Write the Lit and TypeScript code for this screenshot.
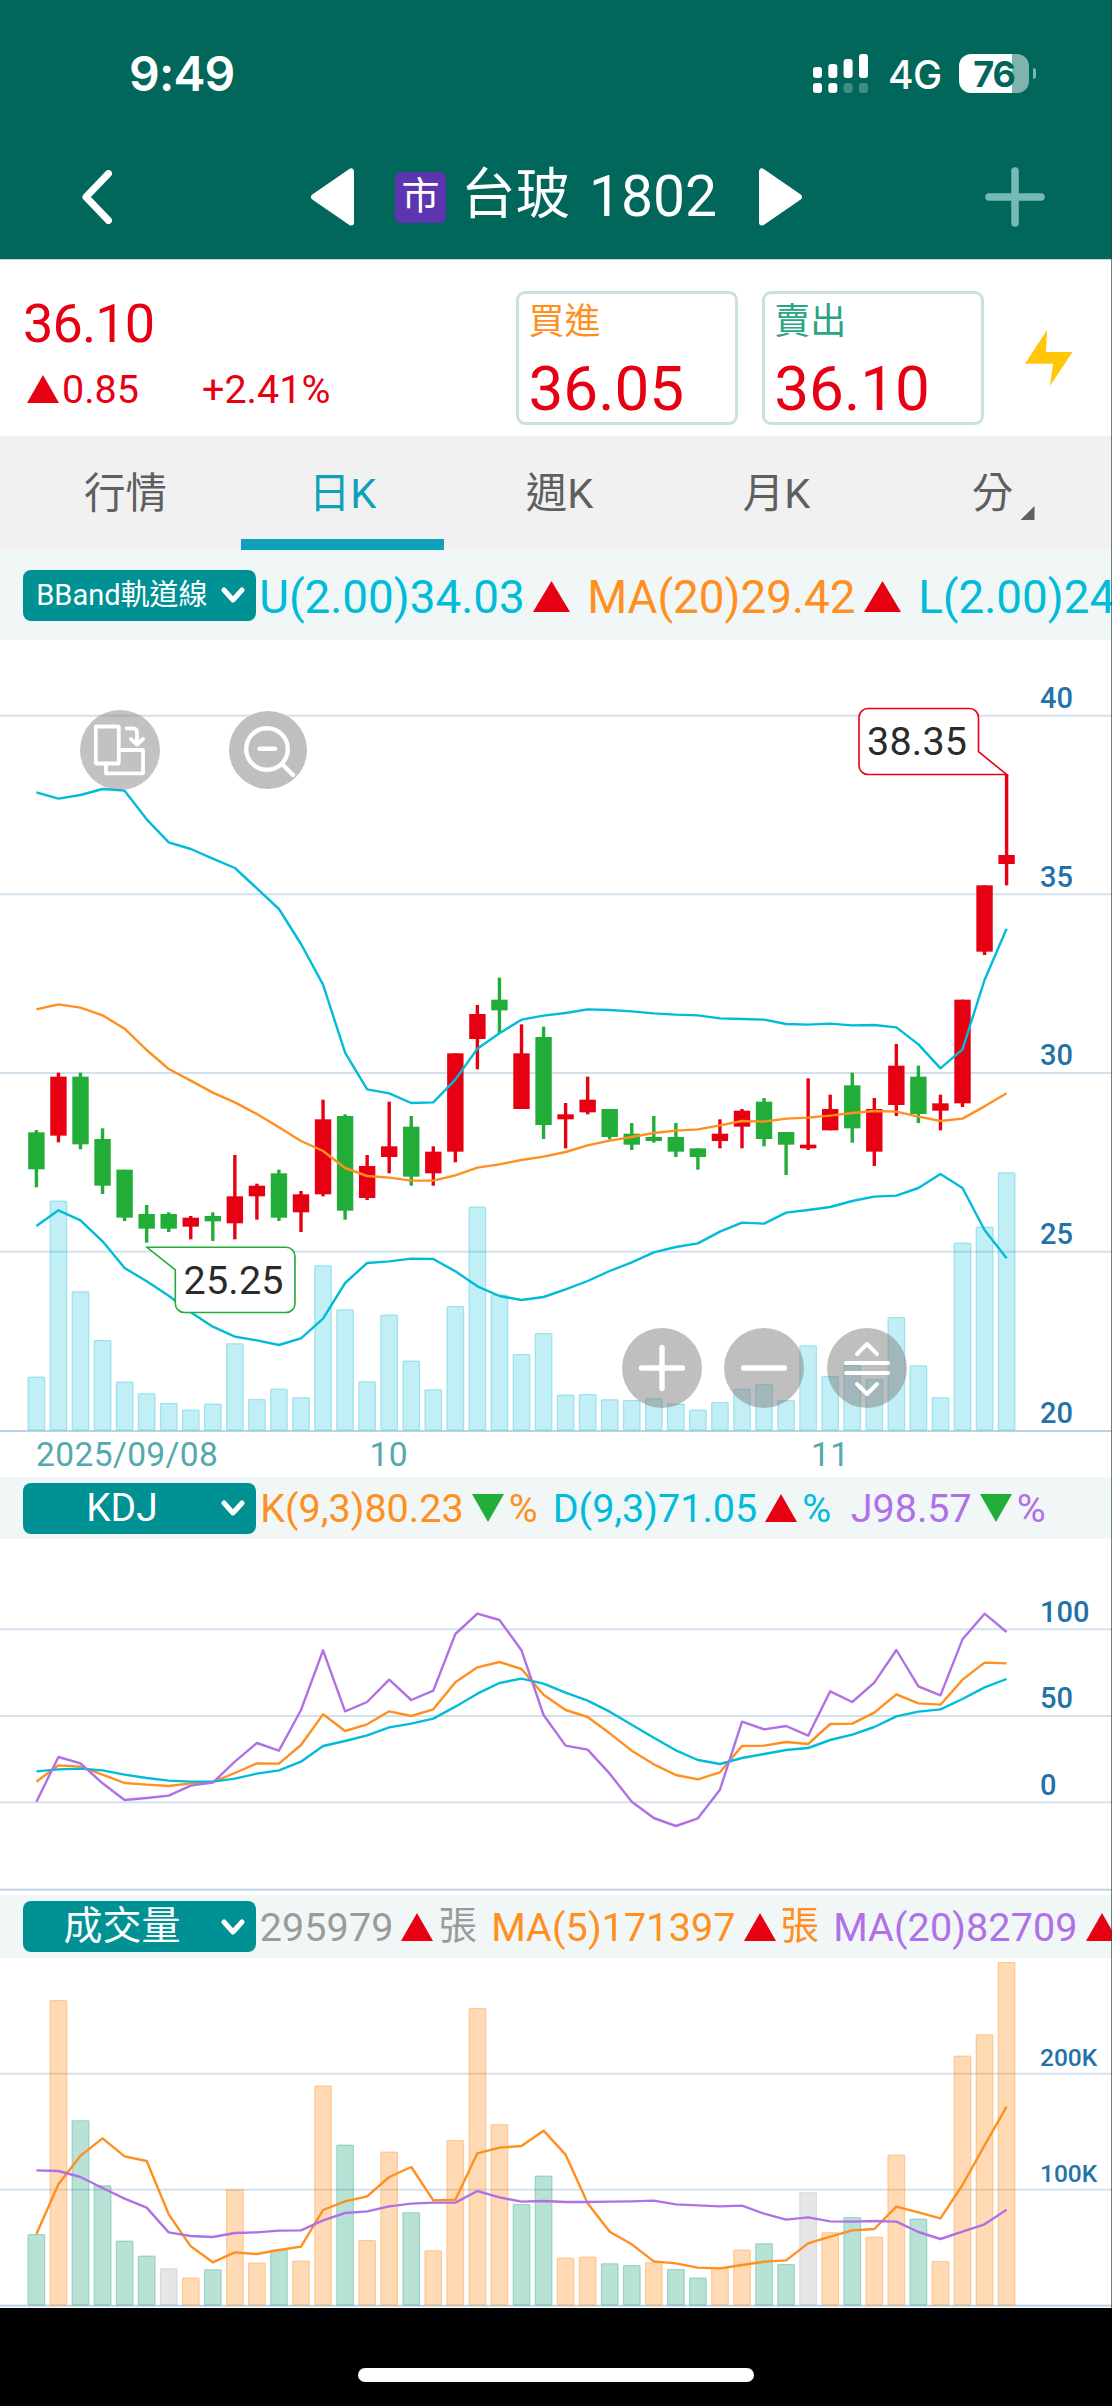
import { LitElement, html, svg, css } from "lit";
import { customElement, property } from "lit/decorators.js";

const RED = "#e60012";
const GREEN = "#22ac38";
const CYAN = "#00bcd9";
const ORANGE = "#ff8f1f";
const PURPLE = "#b070e6";

const FIRST_X = 36.4;
const STEP = 22.05;
const barX = (i: number) => FIRST_X + i * STEP;

// Series ordinates are stored in thirds of a pixel from each pane's own origin.
type Candle = [up: number, top: number, bottom: number, high: number, low: number];

const CANDLES: Candle[] = [
  [0, 277, 388, 270, 442], [1, 110, 287, 98, 307], [0, 110, 313, 98, 328], [0, 297, 437, 265, 462],
  [0, 389, 533, 389, 543], [0, 522, 566, 495, 608], [0, 522, 566, 517, 576], [1, 533, 560, 528, 598],
  [0, 528, 544, 517, 603], [1, 469, 550, 345, 598], [1, 437, 469, 431, 539], [0, 400, 533, 389, 543],
  [1, 463, 517, 453, 576], [1, 238, 463, 179, 469], [0, 228, 512, 223, 539], [1, 378, 474, 345, 480],
  [1, 319, 351, 185, 400], [0, 260, 410, 228, 437], [1, 335, 400, 319, 437], [1, 40, 335, 40, 367],
  [1, -78, -3, -105, 88], [0, -121, -89, -187, -20], [1, 40, 207, -47, 207], [0, -9, 255, -40, 297],
  [1, 223, 238, 189, 325], [1, 179, 217, 110, 223], [0, 207, 291, 207, 298], [0, 281, 314, 249, 330],
  [0, 291, 303, 228, 308], [0, 291, 335, 249, 351], [0, 325, 351, 325, 389], [1, 281, 303, 238, 325],
  [1, 212, 260, 207, 325], [0, 185, 297, 174, 319], [0, 276, 314, 276, 405], [1, 314, 325, 115, 330],
  [1, 207, 271, 164, 271], [0, 136, 265, 98, 308], [1, 207, 335, 174, 378], [1, 77, 195, 12, 228],
  [0, 110, 222, 77, 249], [1, 190, 212, 164, 271], [1, -121, 190, -121, 201], [1, -464, -265, -464, -255],
  [1, -555, -528, -797, -464],
];

const UPPER = [-743, -724, -735, -753, -748, -662, -593, -573, -544, -516, -455, -393, -288, -166, 38, 148, 160, 189,
  187, 119, 26, -20, -61, -73, -81, -92, -90, -86, -80, -76, -74, -65, -63, -61, -48, -46, -49, -44, -45, -38, 13, 85,
  28, -180, -334];
const MIDDLE = [-92, -107, -97, -74, -34, 30, 87, 122, 158, 187, 222, 262, 303, 333, 384, 408, 413, 422, 422, 406, 383,
  373, 360, 350, 336, 316, 302, 291, 279, 272, 268, 256, 243, 245, 236, 233, 227, 219, 213, 215, 230, 243, 236, 199, 160];
const LOWER = [558, 511, 541, 604, 684, 724, 767, 817, 860, 890, 901, 915, 895, 836, 729, 669, 664, 656, 657, 694, 739,
  768, 780, 771, 748, 723, 693, 667, 637, 621, 610, 575, 548, 551, 518, 510, 501, 483, 470, 467, 444, 402, 444, 570, 655];
const BACK_VOLUME = [1010, 482, 754, 900, 1025, 1060, 1089, 1109, 1091, 910, 1077, 1046, 1072, 676, 808, 1024, 824, 962,
  1048, 798, 500, 764, 942, 879, 1064, 1062, 1078, 1080, 1075, 1091, 1109, 1086, 1046, 1032, 1080, 916, 1008, 975, 1017,
  831, 976, 1072, 608, 560, 397];

const J_LINE = [1025, 891, 910, 970, 1020, 1014, 1007, 977, 968, 905, 849, 872, 750, 571, 754, 726, 659, 720, 692, 522,
  461, 480, 571, 765, 857, 869, 941, 1025, 1074, 1098, 1075, 989, 785, 808, 798, 827, 694, 726, 668, 570, 679, 706, 538,
  461, 516];
const K_LINE = [965, 916, 920, 944, 969, 974, 978, 970, 966, 939, 910, 911, 855, 763, 813, 793, 754, 768, 748, 667, 622,
  606, 627, 704, 750, 771, 820, 872, 913, 945, 958, 937, 858, 857, 846, 852, 792, 791, 758, 703, 730, 734, 659, 608, 610];
const D_LINE = [934, 928, 926, 931, 944, 954, 962, 965, 965, 956, 941, 931, 905, 858, 843, 826, 802, 791, 776, 740, 701,
  669, 656, 671, 698, 722, 755, 794, 833, 871, 900, 912, 894, 882, 870, 864, 840, 824, 801, 769, 755, 748, 717, 682, 657];

const VOLUME = [1032, 330, 691, 886, 1052, 1097, 1135, 1163, 1138, 898, 1118, 1079, 1112, 587, 764, 1050, 785, 967, 1081,
  750, 354, 703, 942, 857, 1103, 1100, 1120, 1125, 1116, 1137, 1163, 1133, 1079, 1060, 1122, 907, 1027, 981, 1040, 794,
  986, 1113, 497, 433, 216];
// d = down day, u = up day, f = flat day
const VOLUME_SIDE = "duddddfudu" + "uduuduuduu" + "uudduuddud" + "duuddfuduu" + "duuuu";
const VOL_MA5 = [1032, 883, 797, 745, 799, 813, 973, 1069, 1117, 1087, 1092, 1080, 1070, 960, 934, 919, 861, 831, 931,
  929, 790, 773, 768, 722, 794, 940, 1025, 1063, 1114, 1120, 1133, 1135, 1125, 1115, 1111, 1060, 1040, 1021, 1017, 950,
  967, 985, 885, 766, 650];
const VOL_MA20 = [841, 843, 861, 894, 926, 953, 1027, 1038, 1041, 1029, 1027, 1022, 1021, 991, 969, 964, 949, 941, 938,
  938, 903, 922, 935, 933, 936, 936, 935, 934, 932, 943, 946, 949, 947, 971, 989, 982, 994, 995, 993, 995, 1026, 1047,
  1025, 1003, 959];

const SIDE_COLORS: Record<string, [string, string]> = {
  u: ["rgba(255,143,31,.33)", "rgba(255,143,31,.22)"],
  d: ["rgba(30,160,125,.31)", "rgba(30,160,125,.2)"],
  f: ["rgba(150,150,150,.24)", "rgba(150,150,150,.14)"],
};

function curve(values: number[], origin: number, color: string) {
  const points = values.map((v, i) => `${barX(i).toFixed(2)},${(origin + v / 3).toFixed(2)}`).join(" ");
  return svg`<polyline points=${points} fill="none" stroke=${color} stroke-width="2.4" stroke-linejoin="round"/>`;
}

function grid(y: number, label = "", size = 29, color = "#d3e1ed") {
  return svg`<rect x="0" y=${y - 1} width="1112" height="2" fill=${color}/>
    <text class="axis" x="1040" y=${y - 7.7} font-size=${size}>${label}</text>`;
}

function volumeBar(i: number, top: number, base: number, fill: string, edge: string) {
  const x = barX(i);
  return svg`<rect x=${x - 8.8} y=${top} width="17.6" height=${base - top} rx="1" fill=${fill}/>
    <rect x=${x - 8.2} y=${top + 0.6} width="16.4" height=${base - top - 1.2} rx="1" fill="none" stroke=${edge} stroke-width="1.3"/>`;
}

@customElement("price-pane")
class PricePane extends LitElement {
  static styles = css`
    :host { display: block; position: relative; height: 837px; background: #fff; }
    svg { display: block; }
    text { font-family: Roboto, sans-serif; }
    .axis { font-weight: 500; fill: #2372a8; letter-spacing: 0; }
    .date { font-size: 33.5px; fill: #53a9ab; letter-spacing: 0.4px; }
    .tip { font-size: 39.5px; fill: #2b2b2b; letter-spacing: 0.2px; }
    .tool { position: absolute; width: 80px; height: 80px; padding: 0; border: 0; border-radius: 50%; background: rgba(128, 128, 128, 0.5); }
    .tool svg { stroke: #fff; fill: none; stroke-linecap: round; stroke-linejoin: round; }
    .rotate { left: 80px; top: 69.5px; opacity: .95; }
    .lens { left: 229px; top: 70.5px; width: 78px; height: 78px; background: #bfbfbf; }
    .plus { left: 621.5px; top: 688px; }
    .minus { left: 724px; top: 688px; }
    .stretch { left: 826.5px; top: 688px; }
  `;

  render() {
    const O = 400;
    return html`
      <svg width="1112" height="837" viewBox="0 0 1112 837">
        ${grid(75.7, "40")}${grid(254.3, "35")}${grid(433, "30")}${grid(611.7, "25")}${grid(791, "20", 29, "#bdd3e5")}
        ${BACK_VOLUME.map((v, i) => volumeBar(i, O + v / 3, 790.5, "rgba(0,184,212,.24)", "rgba(0,184,212,.2)"))}
        ${CANDLES.map(([up, top, bottom, high, low], i) => {
          const c = up ? RED : GREEN;
          return svg`<rect x=${barX(i) - 1.7} y=${O + high / 3} width="3.4" height=${(low - high) / 3} fill=${c}/>
            <rect x=${barX(i) - 8.2} y=${O + top / 3} width="16.4" height=${(bottom - top) / 3} fill=${c}/>`;
        })}
        ${curve(UPPER, O, CYAN)}${curve(MIDDLE, O, ORANGE)}${curve(LOWER, O, CYAN)}
        <path d="M868 68.5H969.5A9 9 0 0 1 978.5 77.5V111.7L1006.6 134.5H868A9 9 0 0 1 859 125.5V77.5A9 9 0 0 1 868 68.5Z" fill="#fff" stroke=${RED} stroke-width="1.6"/>
        <text class="tip" x="867" y="115.3">38.35</text>
        <path d="M147 607.3H286A9 9 0 0 1 295 616.3V663.5A9 9 0 0 1 286 672.5H184.3A9 9 0 0 1 175.3 663.5V630Z" fill="#fff" stroke=${GREEN} stroke-width="1.6"/>
        <text class="tip" x="183.5" y="653.8">25.25</text>
        <text class="date" x="36" y="825.5">2025/09/08</text>
        <text class="date" x="369.5" y="825.5">10</text>
        <text class="date" x="811" y="825.5">11</text>
      </svg>
      <button class="tool rotate" aria-label="旋轉">
        <svg width="80" height="80" viewBox="0 0 80 80" stroke-width="3.8">
          <rect x="15.8" y="16.5" width="23" height="37" rx="1"/>
          <path d="M26 54V63.3H63V40H40M46.5 18.3H53Q57 18.3 57 22.5V33M51 29L57 34.5L63 29"/>
        </svg>
      </button>
      <button class="tool lens" aria-label="縮小">
        <svg width="78" height="78" viewBox="0 0 78 78" stroke-width="4.4">
          <circle cx="38" cy="38" r="20.8"/><path d="M30.5 37.8H46M53.5 53.5L64 64"/>
        </svg>
      </button>
      <button class="tool plus" aria-label="放大">
        <svg width="80" height="80" viewBox="0 0 80 80" stroke-width="5.4"><path d="M19.5 40H60.5M40 19.5V60.5"/></svg>
      </button>
      <button class="tool minus" aria-label="減少">
        <svg width="80" height="80" viewBox="0 0 80 80" stroke-width="5.4"><path d="M19.5 40H60.5"/></svg>
      </button>
      <button class="tool stretch" aria-label="伸縮">
        <svg width="80" height="80" viewBox="0 0 80 80" stroke-width="4">
          <path d="M19 35H61M19 45H61M30 26L40 16L50 26M30 56L40 66L50 56"/>
        </svg>
      </button>
    `;
  }
}

@customElement("kdj-pane")
class KdjPane extends LitElement {
  static styles = css`
    :host { display: block; height: 356px; background: #fff; }
    svg { display: block; }
    .axis { font-family: Roboto, sans-serif; font-weight: 500; fill: #2372a8; }
  `;
  render() {
    return html`<svg width="1112" height="356" viewBox="0 0 1112 356">
      ${grid(90.3, "100")}${grid(177, "50")}${grid(263.3, "0")}${grid(350.7, "", 29, "#bdd3e5")}
      ${curve(K_LINE, -79, ORANGE)}${curve(D_LINE, -79, CYAN)}${curve(J_LINE, -79, PURPLE)}
    </svg>`;
  }
}

@customElement("volume-pane")
class VolumePane extends LitElement {
  static styles = css`
    :host { display: block; height: 350px; background: #fff; }
    svg { display: block; }
    .axis { font-family: Roboto, sans-serif; font-weight: 500; fill: #2372a8; }
  `;
  render() {
    return html`<svg width="1112" height="350" viewBox="0 0 1112 350">
      ${grid(115.7, "200K", 24.5)}${grid(231.7, "100K", 24.5)}${grid(347.7, "", 25, "#bdd3e5")}
      ${VOLUME.map((v, i) => {
        const [fill, edge] = SIDE_COLORS[VOLUME_SIDE[i]];
        return volumeBar(i, v / 3 - 68, 347.5, fill, edge);
      })}
      ${curve(VOL_MA5, -68, ORANGE)}${curve(VOL_MA20, -68, PURPLE)}
    </svg>`;
  }
}

@customElement("select-button")
class SelectButton extends LitElement {
  @property() label = "";
  @property({ type: Boolean, reflect: true }) small = false;
  static styles = css`
    :host { display: block; flex: none; width: 233.5px; height: 51px; }
    .button { display: flex; box-sizing: border-box; width: 100%; height: 100%; align-items: center; padding: 0 11px 0 0;
      border-radius: 8px; background: #009194; color: #fff; font-size: 39px; line-height: 51px; letter-spacing: 0; }
    .text { flex: 1; height: 51px; text-align: center; white-space: nowrap; }
    :host([small]) .text { font-size: 29px; }
  `;
  render() {
    return html`<div class="button"><span class="text">${this.label}</span>
      <svg width="24" height="18" viewBox="0 0 24 18"><path d="M3 4L12 14L21 4" fill="none" stroke="#fff" stroke-width="5" stroke-linecap="round" stroke-linejoin="round"/></svg>
    </div>`;
  }
}

const arrow = (up: boolean, w: number, h: number) => html`<svg class="arrow" width=${w} height=${h} viewBox="0 0 10 10" preserveAspectRatio="none">
  <path d=${up ? "M5 0L10 10H0Z" : "M0 0H10L5 10Z"} fill=${up ? RED : GREEN}/></svg>`;

@customElement("app-root")
class AppRoot extends LitElement {
  static styles = css`
    :host { display: block; position: relative; width: 1112px; height: 2406px; overflow: hidden; background: #fff;
      font-family: Roboto, "Noto Sans CJK TC", sans-serif; }
    .edge { position: absolute; top: 0; right: 0; width: 1px; height: 2308px; background: rgba(40, 60, 62, 0.65); }
    svg { display: block; flex: none; }

    .header { height: 260px; background: #01675b; color: #fff; border-bottom: 1px solid #c9d0cf; box-sizing: border-box; }
    .status { display: flex; height: 135px; padding: 12px 76px 0 129px; box-sizing: border-box; align-items: center; justify-content: space-between;
      font-family: Inter, sans-serif; }
    .clock { font-size: 48px; font-weight: 600; letter-spacing: -0.8px; }
    .indicators { display: flex; align-items: center; }
    .network { margin: 2px 0 0 18px; width: 71px; font-size: 39px; font-weight: 500; letter-spacing: -0.5px; }
    .battery { display: flex; align-items: center; }
    .cell { width: 70px; height: 39px; border-radius: 12px; background: linear-gradient(90deg, #fff 53px, #80b3ad 53px);
      color: #01675b; font-size: 36px; line-height: 40px; font-weight: 700; text-align: center; letter-spacing: -1.2px; }
    .nub { width: 3px; height: 11px; margin-left: 4px; border-radius: 0 3px 3px 0; background: #80b3ad; }
    .nav { display: flex; align-items: center; height: 124px; padding: 0 67px 0 82px; }
    .back { margin-right: 199px; }
    .badge { margin: 0 17px 0 41px; width: 51px; height: 51px; border-radius: 6px; background: #5e35b1; font-size: 38px; line-height: 49px; text-align: center; }
    .name { display: flex; align-items: center; width: 296px; gap: 19px; font-size: 57px; white-space: nowrap; }
    .hanzi { font-size: 54.5px; line-height: 60px; margin: -3px 0 3px -2px; }
    .code { line-height: 60px; }
    .add { margin-left: auto; }

    .quote { display: flex; height: 176px; box-sizing: border-box; padding: 31px 39px 0 24px; color: #e60012; }
    .price { width: 493px; }
    .last { margin: 3px 0 0 -1px; font-size: 54px; line-height: 60px; letter-spacing: -.9px; }
    .delta { display: flex; align-items: center; margin: 12px 0 0 3px; height: 46px; font-size: 39.5px; }
    .change { width: 140px; margin-left: 3px; }
    .box { box-sizing: border-box; width: 222px; height: 134px; margin-right: 24px; padding: 0 0 0 9px; border: 3px solid #c9e1e3; border-radius: 9px; }
    .side { font-size: 36px; line-height: 36px; margin-top: 10px; }
    .bid { color: #ff8f1f; }
    .ask { color: #27a584; }
    .value { font-size: 62px; line-height: 72px; margin-top: 13px; }
    .bolt { margin: 39px 0 0 17px; }

    .tabs { display: flex; height: 114px; padding: 0 10px 0 17px; background: #f1f1f1; color: #5f5f5f; font-size: 41.5px; }
    .tab { position: relative; width: 217px; line-height: 115px; text-align: center; }
    .active { color: #10a1ba; }
    .active::after { content: ""; position: absolute; left: 6.5px; right: 7.5px; bottom: 0; height: 11px; background: #10a1ba; }
    .last-tab { padding-right: 2px; width: 215px; }
    .corner { position: absolute; left: 135.5px; top: 70px; width: 14px; height: 14px; background: #5f5f5f; clip-path: polygon(100% 0, 100% 100%, 0 100%); }

    .legend { display: flex; align-items: center; height: 62px; padding-left: 22.7px; background: #f1f7f7; white-space: nowrap; overflow: hidden; font-size: 39.5px; }
    .legend span { flex: none; }
    .i { display: flex; align-items: center; line-height: 46px; padding-top: 2px; }
    .tall { height: 90px; font-size: 45.8px; }
    .tall .i { padding-top: 5px; }
    .vol { height: 63px; letter-spacing: 0.1px; }
    .cyan { color: #00bcd9; }
    .orange { color: #ff8f1f; }
    .purple { color: #b070e6; }
    .gray { color: #9b9b9b; }
    .i .arrow { margin: -2px 5px 0 8px; }
    .zhang { margin: -2px 0 2px; font-size: 38.5px; }
    .w1 { width: 328px; margin-left: 3px; }
    .w2 { width: 331px; }
    .k { width: 292.5px; margin-left: 4px; }
    .d { width: 298px; }
    .v0 { width: 231.5px; margin-left: 3.5px; }
    .v1 { width: 342px; }

    .home { display: flex; justify-content: center; height: 98px; background: #000; }
    .pill { width: 396px; height: 14px; margin-top: 60px; border-radius: 7px; background: #fff; }
  `;

  render() {
    return html`
      <div class="header">
        <div class="status">
          <span class="clock">9:49</span>
          <div class="indicators">
            <svg width="57" height="39" viewBox="0 0 57 39" fill="#fff">
              <rect x="0" y="13" width="9" height="11" rx="3"/><rect x="15.3" y="10" width="9" height="14" rx="3"/>
              <rect x="30.6" y="5" width="9" height="19" rx="3"/><rect x="46" y="0" width="9" height="24" rx="3"/>
              <rect x="0" y="29" width="9" height="10" rx="3"/><rect x="15.3" y="29" width="9" height="10" rx="3"/>
              <rect x="30.6" y="29" width="9" height="10" rx="3" opacity=".25"/><rect x="46" y="29" width="9" height="10" rx="3" opacity=".25"/>
            </svg>
            <span class="network">4G</span>
            <div class="battery"><div class="cell">76</div><div class="nub"></div></div>
          </div>
        </div>
        <div class="nav">
          <svg class="back" width="30" height="54" viewBox="0 0 30 54"><path d="M26.5 3.5L4 27L26.5 50.5" fill="none" stroke="#fff" stroke-width="7" stroke-linecap="round" stroke-linejoin="round"/></svg>
          <svg width="43" height="58" viewBox="0 0 43 58"><path d="M40 3.5V54.5L3 29Z" fill="#fff" stroke="#fff" stroke-width="6" stroke-linejoin="round"/></svg>
          <div class="badge">市</div>
          <div class="name"><span class="hanzi">台玻</span><span class="code">1802</span></div>
          <svg width="43" height="58" viewBox="0 0 43 58"><path d="M3 3.5V54.5L40 29Z" fill="#fff" stroke="#fff" stroke-width="6" stroke-linejoin="round"/></svg>
          <svg class="add" width="60" height="60" viewBox="0 0 60 60"><path d="M4 30H56M30 4V56" stroke="#78b9b8" stroke-width="7.5" stroke-linecap="round"/></svg>
        </div>
      </div>

      <div class="quote">
        <div class="price">
          <div class="last">36.10</div>
          <div class="delta">${arrow(true, 32, 28)}<span class="change">0.85</span><span>+2.41%</span></div>
        </div>
        <div class="box"><div class="side bid">買進</div><div class="value">36.05</div></div>
        <div class="box"><div class="side ask">賣出</div><div class="value">36.10</div></div>
        <svg class="bolt" width="48" height="56" viewBox="0 0 48 56"><path d="M22 0L21 22H47.5L25 56L28 33.7H0Z" fill="#ffc60a"/></svg>
      </div>

      <div class="tabs">
        <div class="tab">行情</div>
        <div class="tab active">日K</div>
        <div class="tab">週K</div>
        <div class="tab">月K</div>
        <div class="tab last-tab">分<i class="corner"></i></div>
      </div>

      <div class="legend tall">
        <select-button small label="BBand軌道線"></select-button>
        <span class="i w1 cyan">U(2.00)34.03${arrow(true, 37, 31)}</span>
        <span class="i w2 orange">MA(20)29.42${arrow(true, 37, 31)}</span>
        <span class="i cyan">L(2.00)24</span>
      </div>
      <price-pane></price-pane>

      <div class="legend kdj">
        <select-button label="KDJ"></select-button>
        <span class="i k orange">K(9,3)80.23${arrow(false, 32, 28)}%</span>
        <span class="i d cyan">D(9,3)71.05${arrow(true, 32, 28)}%</span>
        <span class="i purple">J98.57${arrow(false, 32, 28)}%</span>
      </div>
      <kdj-pane></kdj-pane>

      <div class="legend vol">
        <select-button label="成交量"></select-button>
        <span class="i v0 gray">295979${arrow(true, 32, 28)}<span class="zhang">張</span></span>
        <span class="i v1 orange">MA(5)171397${arrow(true, 32, 28)}<span class="zhang">張</span></span>
        <span class="i purple">MA(20)82709${arrow(true, 32, 28)}</span>
      </div>
      <volume-pane></volume-pane>

      <div class="home"><div class="pill"></div></div>
      <div class="edge"></div>
    `;
  }
}
